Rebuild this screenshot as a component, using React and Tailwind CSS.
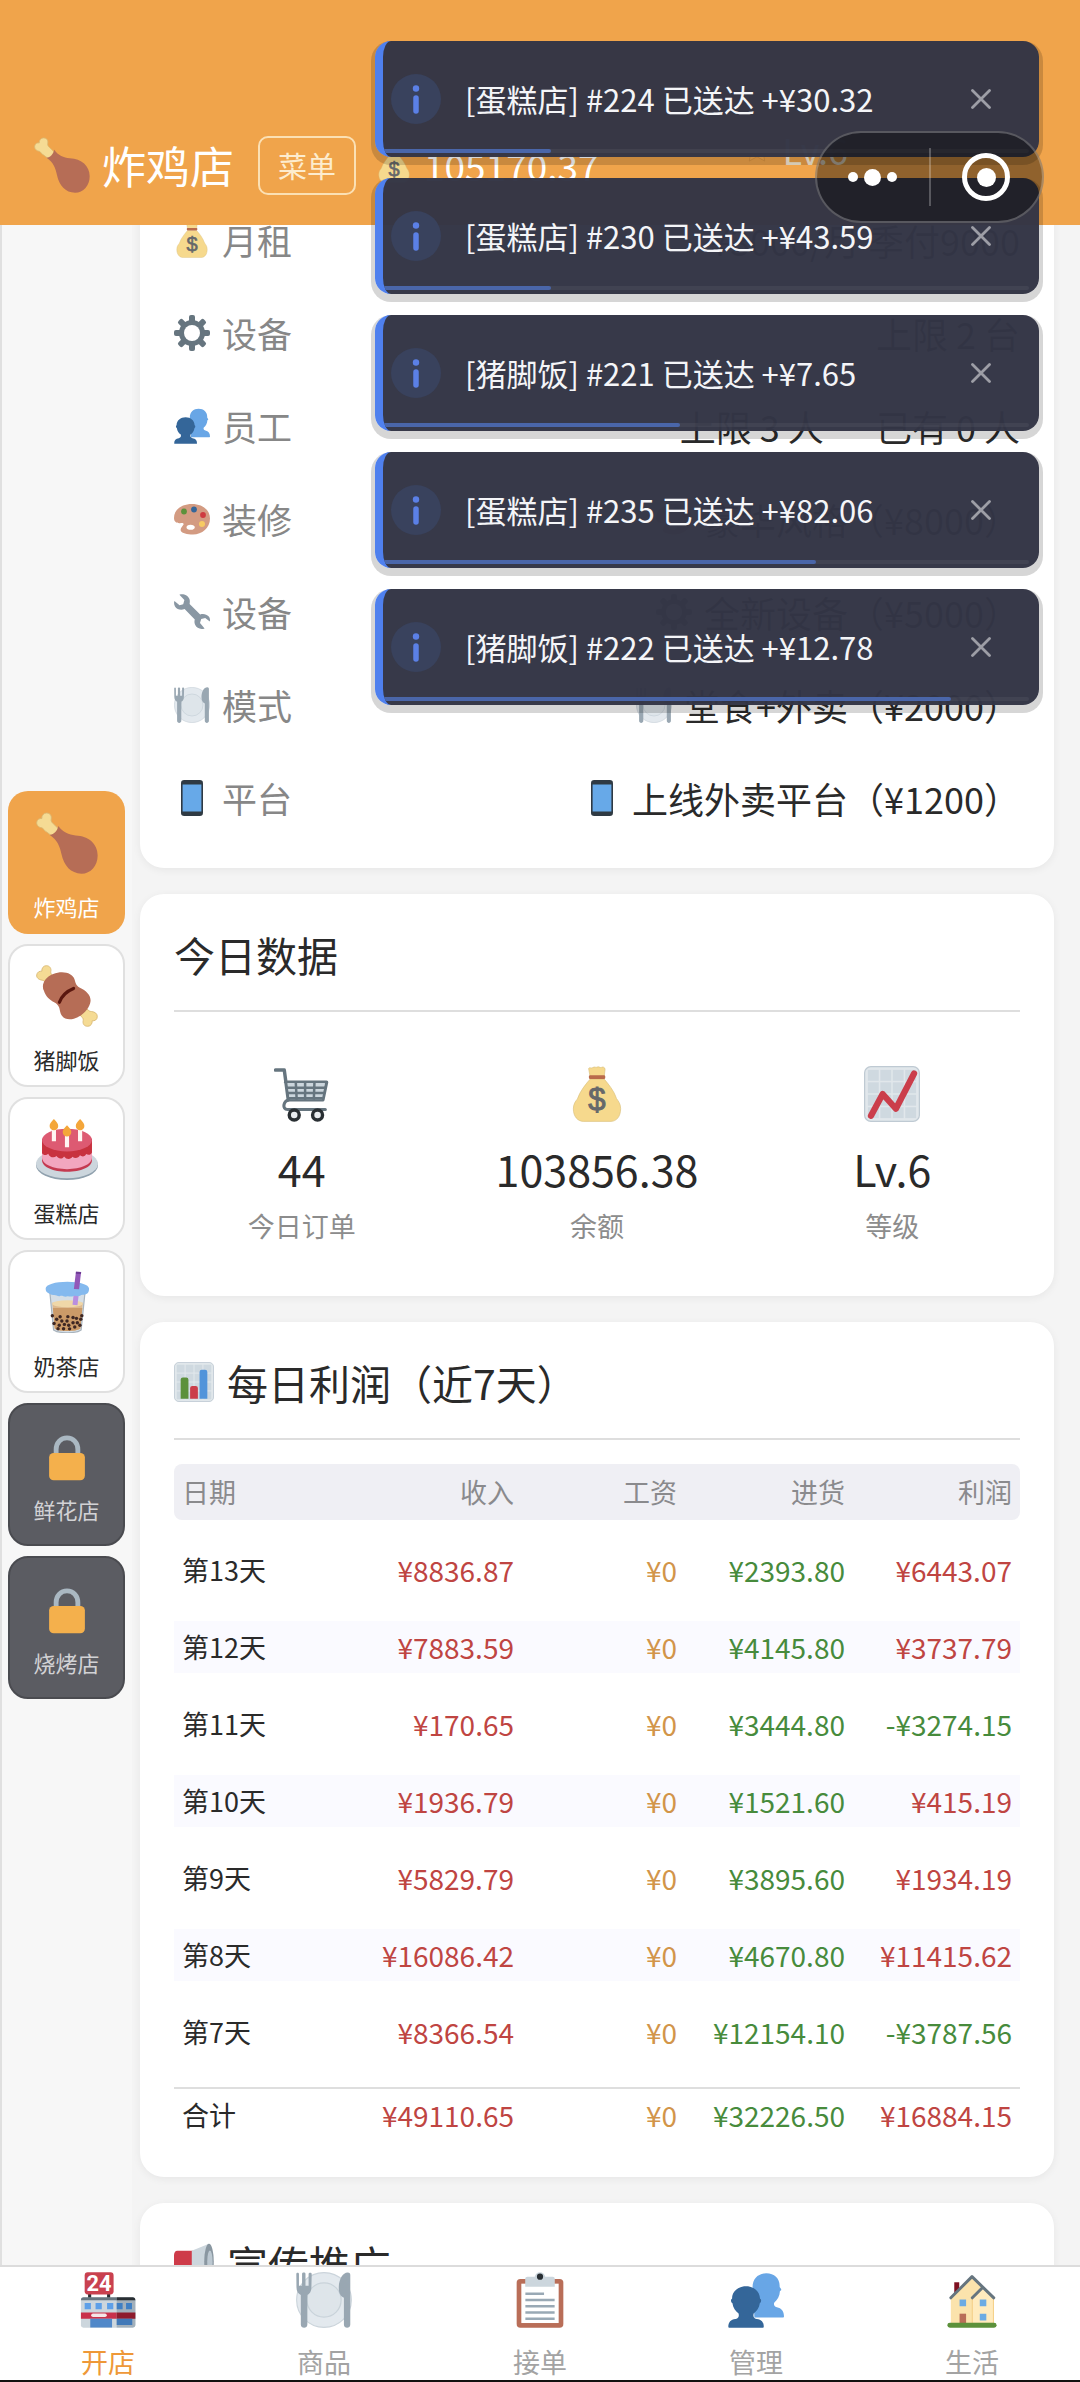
import React from "react";

/* ---------- pictograms ---------- */

function Svg({ className, children, viewBox = "0 0 36 36" }) {
  return (
    <svg viewBox={viewBox} className={"block shrink-0 " + className} aria-hidden="true">
      {children}
    </svg>
  );
}

function Drumstick({ className }) {
  return (
    <Svg className={className}>
      <path d="M6.200 11.600C4.600 11 4.600 9.600 3.400 9.200 1.800 9 .2 7.800.4 6 .6 4.200 2.200 3.600 3.400 3.800 3.200 2.200 4.400.6 6.200.6c2.200 0 3 1.800 2.600 3.600-.2 1.200.4 1.800 1.200 2.600l5.600 5.400-3.400 4z" fill="#F5DB94" stroke="#D9B873" strokeWidth=".5" />
      <path d="M13 8.200c2.600 3.600 6 5.200 10 5.400C30.600 13.800 35.800 18.600 35.800 25.200c0 6-4 10.600-9.400 10.600-6.200 0-10.200-4.600-11.600-11.200-.9-4.400-2.400-8.400-6.800-11.200 2.600-.4 4.400-2.400 5-5.200z" fill="#B66D56" />
    </Svg>
  );
}

function MeatOnBone({ className }) {
  return (
    <Svg className={className}>
      <path d="M6.200 10.600C5 10 4.800 9 3.600 8.800 1.600 8.600.2 7.400.4 5.800.6 4.200 2 3.400 3.400 3.600 3.200 2 4.200.4 6 .4c2 0 3 1.600 2.600 3.400-.2 1.200.4 1.600 1 2.200L12 8.800 8.600 12.800z" fill="#F5DB94" stroke="#D9B873" strokeWidth=".5" />
      <path d="M29.600 25.600c1 .8 1.400 1.400 2.600 1.400 2 .2 3.400 1.200 3.400 3 0 1.800-1.600 2.600-3 2.400.2 1.600-.8 3.200-2.600 3.200-2.200 0-3-1.600-2.600-3.400.2-1.200-.4-1.600-1-2.200L24 27.600l3.200-4z" fill="#F5DB94" stroke="#D9B873" strokeWidth=".5" />
      <path d="M4.600 15c-1.800-3.400.6-8 5.400-9.800 5.600-2.200 11.200-.6 12.400 3.200.6 2 .8 3.400 2.800 4.600 4.800 2.200 7.400 5.400 6.200 9.400-1.200 4-5 7.600-9.400 8.800-4.400 1.200-7.400-.8-8-4.200-.4-2.400-1-4-3.200-5.200C7.800 20.200 5.600 18.200 4.600 15z" fill="#B66D56" />
      <path d="M13.600 21.600c1.400-3.800 4.200-6.400 8.200-8" fill="none" stroke="#5A170F" strokeWidth="1.900" strokeLinecap="round" />
    </Svg>
  );
}

function Cake({ className }) {
  return (
    <Svg className={className}>
      <ellipse cx="18" cy="27.600" rx="18" ry="8.400" fill="#8FA0AD" />
      <ellipse cx="18" cy="26.600" rx="18" ry="8.400" fill="#CCD6DD" />
      <path d="M3.500 13v11.500c0 4 6.500 6.700 14.500 6.700s14.500-2.700 14.500-6.700V13z" fill="#C43A50" />
      <path d="M3.500 13v10c0 4 6.500 6.700 14.500 6.700S32.500 27 32.500 23V13z" fill="#F2A6BF" />
      <path d="M3.500 12v8.500c1 1.600 2.800 1 3.600.2 1 2.400 3.400 2.600 4.800 1.400 1.200 1.800 3.200 2 4.400.2 1.400 2 4 1.800 4.800.2 1.600 1.400 3.600.8 4.400-.8 1.600 1.200 3.200.4 3.600-.8 1.200.8 2.800.6 3.400-.9V12z" fill="#C8323F" />
      <ellipse cx="18" cy="12.800" rx="14.500" ry="6.600" fill="#DD5A72" />
      <path d="M9.200 6.500h2.400v7H9.200zM16.800 10h2.400v7h-2.400zM24.400 6.500h2.400v7h-2.400z" fill="#FFF5F2" />
      <path d="M10.400.6c1.600 1.600 2.500 2.800 2.500 4a2.500 2.500 0 0 1-5 0c0-1.200.9-2.400 2.500-4zM18 4.200c1.600 1.600 2.500 2.800 2.500 4a2.500 2.500 0 0 1-5 0c0-1.200.9-2.400 2.500-4zM25.600.6c1.600 1.600 2.500 2.800 2.500 4a2.500 2.500 0 0 1-5 0c0-1.200.9-2.400 2.500-4z" fill="#F4A63A" />
    </Svg>
  );
}

function BubbleTea({ className }) {
  const pearls = [
    [9.500, 26], [12, 28], [10.500, 30.500], [13.500, 31.500], [15, 29], [12.800, 33.500], [16.500, 31],
    [16, 33.500], [18, 29], [19, 31.500], [19.500, 33.600], [21.500, 30], [22.500, 32.500], [24, 30],
    [23.500, 27.500], [26, 28], [25.500, 31.500], [18.500, 26.500], [21.500, 27], [26.600, 26], [14, 26.600],
  ];
  return (
    <Svg className={className}>
      <path d="M8 12h20.500l-2.300 22.200c-3 2.200-13 2.200-16 0z" fill="#D5DEE6" stroke="#A9B4BD" strokeWidth=".7" />
      <path d="M9.400 18.500h17.800l-1.500 15c-3 1.700-11.800 1.700-14.800 0z" fill="#DDB98E" />
      <path d="M9.800 21.500h17.100l-1.200 12c-3 1.700-11.800 1.700-14.800 0z" fill="#CB9A68" />
      <ellipse cx="18.300" cy="19" rx="8.900" ry="2" fill="#EFD7A8" />
      {pearls.map(([x, y], i) => (
        <circle key={i} cx={x} cy={y} r="1" fill="#3E2723" />
      ))}
      <path d="M22 12.500l2.900.2-.8 7.200-2.900-.3z" fill="#B98FE0" />
      <path d="M5.600 10.200c0-2.400 5.600-4 12.600-4s12.600 1.600 12.600 4c0 2.200-.8 3-1.600 3.200-1.400.8-2.800.2-3.600 1-1.600.6-2.800-.4-4 .2-1.600.6-2.600-.2-3.800.2-1.400.4-2.600-.8-4-.2-1.400.2-2.200-.8-3.600-.6-1.600 0-2.400-1-3.200-1.200-.8-.4-1.400-1-1.400-2.600z" fill="#84B9EE" />
      <path d="M23.200.4l3 .2-1.200 10-3-.2z" fill="#9257B8" />
      <path d="M23.200.4l3 .2-.1 1.200-3-.2z" fill="#6D3A94" />
    </Svg>
  );
}

function Lock({ className }) {
  return (
    <Svg className={className}>
      <path d="M9.500 16v-4.600C9.500 6 13.200 2.300 18 2.300s8.500 3.700 8.500 9.100V16" fill="none" stroke="#AAB8C2" strokeWidth="3.800" />
      <rect x="4" y="14" width="28" height="21.500" rx="3.600" fill="#F4B04C" />
    </Svg>
  );
}

function MoneyBag({ className }) {
  return (
    <Svg className={className}>
      <path d="M12.600 1.600c.8-1.200 1.800.2 2.800-.6 1-.9 1.800.3 2.700-.3 1-.6 1.800.6 2.700.2 1.200-.6 2.200 0 2.400 1.200L22.600 7h-9z" fill="#F6D98D" stroke="#D9BE7A" strokeWidth=".4" />
      <path d="M13.600 8.400h9c2.600 3 6.400 7.600 8 12.600 1 1.400 2.600 3.200 2.600 6.400 0 5-2.600 8.200-6.200 8.200H9.200C5.600 35.600 2.800 32.400 2.800 27.600c0-3.400 1.400-4.800 2.600-6.400 1.600-5 5.600-9.800 8.200-12.800z" fill="#F6D98D" stroke="#D9BE7A" strokeWidth=".4" />
      <rect x="12.800" y="6" width="10.500" height="2.400" rx=".8" fill="#B96A4B" />
      <text x="18" y="28.500" textAnchor="middle" fontFamily="Liberation Sans" fontSize="20" fill="#66686A" stroke="#66686A" strokeWidth=".6">$</text>
    </Svg>
  );
}

function Gear({ className }) {
  return (
    <Svg className={className}>
      {[0, 45, 90, 135].map((a) => (
        <rect key={a} x="15" y="0" width="6" height="36" rx="2" fill="#66757F" transform={"rotate(" + a + " 18 18)"} />
      ))}
      <circle cx="18" cy="18" r="13" fill="#66757F" />
      <circle cx="18" cy="18" r="8" fill="#fff" />
    </Svg>
  );
}

function People({ className }) {
  return (
    <Svg className={className}>
      <path d="M15.800 9.600C15.800 4 19.600.8 24.600.8c5.200 0 8.600 3.400 8.600 8 0 .8 0 1 .6 1.600.8 1 .4 1.600-.4 1.800-.2 3.400-1.600 5.600-3.600 7.400-.6 1-.2 2.600 1.600 3 3 .6 4.600 2.600 4.600 6 0 .4-.2.600-.6.600H17z" fill="#68A6E6" />
      <path d="M2.800 20c-1-.4-1.200-2.600-.2-2.800C2.600 12.400 6.600 9.200 11.600 9.200s8.800 3.200 9 8c1 .2.900 2.400-.1 2.800-.5 3.200-2 5.200-4 6.600-.4 1.600-.2 3 2 3.600 3 .4 4.500 2 4.500 5 0 .400-.2.600-.6.600H.8c-.4 0-.6-.2-.6-.6 0-3 1.600-4.600 4.600-5 2.200-.6 2.400-2 2-3.600-2-1.400-3.500-3.400-4-6.600z" fill="#346699" />
    </Svg>
  );
}

function Palette({ className }) {
  return (
    <Svg className={className}>
      <path fillRule="evenodd" d="M18 3c10.400 0 18 6 18 14.500C36 27 28 33.500 19 33.500c-6 0-11-1-12.200-3.700-.8-2.200 1.200-4 2.600-6 .8-1.400-.6-2.200-2.400-1.800C4 22.600 0 21.800 0 17 0 8.500 7.600 3 18 3zM16.500 23.800c-2.500 0-4 1.200-4 2.600s1.800 2.400 4.300 2.400 4-1.200 4-2.600-1.800-2.400-4.300-2.400z" fill="#D39B82" />
      <circle cx="10" cy="10.500" r="2.900" fill="#5C913B" />
      <circle cx="20" cy="8.500" r="2.900" fill="#346699" />
      <circle cx="29" cy="14" r="2.900" fill="#CE3B40" />
      <circle cx="28" cy="23" r="3" fill="#F8CB62" />
    </Svg>
  );
}

function Wrench({ className }) {
  return (
    <Svg className={className}>
      <path d="M5.400.8c3.600-1.400 8.800.6 10.200 4.600.4 1.800.2 3.400 0 4.600l10.600 10.400c3-1 6.400-.4 8.600 2.200 1.200 1.400 1.400 3.400 1 5l-4.600-3.600-4 1-1.200 4 4.600 5.400c-3.600 1.600-8 0-9.600-3.800-.8-2-.6-3.800-.2-5.200L10.600 15c-3.600 1.600-7.600.4-9.600-2.600C0 10.600-.2 8.600.4 7l5.200 4.200 3.600-1L10.400 6z" fill="#8997A3" />
    </Svg>
  );
}

function Plate({ className }) {
  return (
    <Svg className={className}>
      <circle cx="18" cy="18" r="17.600" fill="#E3E9EE" stroke="#CBD4DB" strokeWidth=".7" />
      <circle cx="18" cy="18" r="11" fill="#DEE5EA" stroke="#C9D3DA" strokeWidth=".8" />
      <path d="M.2 1.200C.2.200 1.900.2 1.900 1.200v7.600h2V1.200c0-1.100 2.200-1.100 2.200 0v7.600h2V1.200c0-1 2-1 2 0l-.2 8.600c0 2.600-1 4.200-2.600 5v19c0 2.800-4.200 2.800-4.200 0v-19C1.400 14 .3 12.400.3 9.800z" fill="#99A7B2" />
      <path d="M33.300.3c1.200 0 1.600.7 1.600 1.700v31.800c0 2.800-4.100 2.800-4.100 0V16.600c-2.500-1.200-3.400-3.600-3.300-7C27.700 4.600 30 .3 33.300.3z" fill="#99A7B2" />
    </Svg>
  );
}

function Phone({ className }) {
  return (
    <Svg className={className}>
      <rect x="7" y="0" width="22" height="36" rx="3.200" fill="#2F3A43" />
      <rect x="8.600" y="4.500" width="18.800" height="27" fill="#67A9E8" />
    </Svg>
  );
}

function Cart({ className }) {
  return (
    <Svg className={className}>
      <path d="M1 2.600h5.600l2.600 19.200M7.400 10.400h26.400l-2.400 11.400H9.400" fill="none" stroke="#66757F" strokeWidth="2.200" strokeLinecap="round" strokeLinejoin="round" />
      <path d="M8.600 11h24.200l-2 10.400H10z" fill="#CCD6DD" />
      <path d="M8.400 14h24.600M8.800 17.400h23.400M9.400 20.800h22M14 10.400l.6 11.400M20 10.400v11.400M26 10.400l-.4 11.400" fill="none" stroke="#66757F" strokeWidth="1.600" />
      <path d="M9.400 21.800c-3.600.8-4.200 6.200-.8 6.200H33" fill="none" stroke="#66757F" strokeWidth="2" strokeLinecap="round" />
      <circle cx="13" cy="31.500" r="3.200" fill="#E8ECEF" stroke="#292F33" strokeWidth="2.200" />
      <circle cx="28" cy="31.500" r="3.200" fill="#E8ECEF" stroke="#292F33" strokeWidth="2.200" />
    </Svg>
  );
}

function ChartGrid() {
  return (
    <>
      <rect x=".4" y=".4" width="35.200" height="35.200" rx="4" fill="#E1E7EB" stroke="#BFCAD3" strokeWidth=".8" />
      {[2.500, 10.500, 18.500, 26.500].map((y) =>
        [2.500, 10.500, 18.500, 26.500].map((x) => (
          <rect key={x + "-" + y} x={x} y={y} width="7" height="7" fill="#CFD9E0" />
        ))
      )}
    </>
  );
}

function TrendChart({ className }) {
  return (
    <Svg className={className}>
      <ChartGrid />
      <path d="M4.500 32L12 18l8.500 9.500L32.200 4.800" fill="none" stroke="#CB3E4B" strokeWidth="4" strokeLinecap="round" strokeLinejoin="round" />
    </Svg>
  );
}

function BarChart({ className }) {
  return (
    <Svg className={className}>
      <ChartGrid />
      <path d="M6 33V16a2 2 0 0 1 2-2h3a2 2 0 0 1 2 2v17z" fill="#5C913B" />
      <path d="M14.500 33V23.500a2 2 0 0 1 2-2h3a2 2 0 0 1 2 2V33z" fill="#CB3E4B" />
      <path d="M23 33V9a2 2 0 0 1 2-2h3a2 2 0 0 1 2 2v24z" fill="#5294DA" />
    </Svg>
  );
}

function Megaphone({ className }) {
  return (
    <Svg className={className}>
      <path d="M9 24h8l2 10h-7z" fill="#8A97A1" />
      <path d="M3 7h14v19H3c-1.800 0-3-1.800-3-4V11c0-2.200 1.200-4 3-4z" fill="#CE3B49" />
      <path d="M16 7L31.500.6V33L16 26z" fill="#CCD6DD" />
      <ellipse cx="31.500" cy="16.800" rx="4.300" ry="16.200" fill="#8A97A1" />
      <ellipse cx="32.300" cy="16.800" rx="2.400" ry="10" fill="#BCC8D1" />
    </Svg>
  );
}

function Store24({ className }) {
  return (
    <Svg className={className}>
      <path d="M5.200 13h2v4h-2zM17.400 13h2v4h-2z" fill="#292F33" />
      <rect x="3" y=".2" width="18.600" height="14.200" rx="2" fill="#C9414F" />
      <text x="12.200" y="12" textAnchor="middle" fontFamily="Roboto, sans-serif" fontWeight="700" fontSize="14" fill="#fff">24</text>
      <rect x=".6" y="16.500" width="35" height="19.300" rx="1.600" fill="#CCD6DD" />
      <path d="M23.600 16.500h10.400a1.600 1.600 0 0 1 1.600 1.600v16a1.600 1.600 0 0 1-1.600 1.600H23.600z" fill="#A2B0BB" />
      <path d="M.6 18.200c0-1.200.6-2 1.600-2h21.400v2z" fill="#66757F" />
      <path d="M23.600 16.200H34c1 0 1.600.8 1.600 2h-12z" fill="#292F33" />
      <path d="M3 20h4v4H3zM10 20h4v4h-4zM17.400 20h4v4h-4z" fill="#5D9FE8" />
      <path d="M23.600 20h3.800v4h-3.800zM29.600 20h3.800v4h-3.800z" fill="#3F7FC4" />
      <path d="M.6 26h23v4H.6z" fill="#C9304A" />
      <path d="M23.600 26h12v4h-12z" fill="#8E1B2C" />
      <rect x="7.200" y="26.700" width="10" height="2.200" rx="1.100" fill="#F5E6E8" />
      <path d="M6.600 30h14v5.700h-14z" fill="#5088C9" />
      <path d="M23.600 30h10v4h-10z" fill="#4179B8" />
    </Svg>
  );
}

function Clipboard({ className }) {
  return (
    <Svg className={className}>
      <rect x="3" y="4.500" width="30" height="31.300" rx="2.400" fill="#B96E58" />
      <rect x="6" y="7.500" width="24" height="25.300" fill="#fff" />
      <path d="M8.600 14h12M8.600 18h18.800M8.600 22h18.800M8.600 26h18.800M8.600 30h18.800" stroke="#99A9B5" strokeWidth="1.600" />
      <path d="M8.500 4.500c0-1 .6-1.500 1.500-1.500h4.600C15 1.400 16.300.2 18 .2S21 1.400 21.400 3H26c.9 0 1.500.5 1.500 1.500v5h-19z" fill="#CCD6DD" />
      <circle cx="18" cy="3" r="2" fill="#292F33" />
    </Svg>
  );
}

function House({ className }) {
  return (
    <Svg className={className}>
      <path d="M6.600 6.600h3.200v8H6.600z" fill="#7E1020" />
      <path d="M4.400 16L18 2.800l7.600 7.800 6.200 6.400v16H4.400z" fill="#FBE3AC" />
      <path d="M18.200 17l7-7 6.600 7v16H18.200z" fill="#FFEBBE" stroke="#F3CE83" strokeWidth=".6" />
      <path d="M4.400 16.600L18 3l14 13.600M18.200 16.600l6.800-6.800" fill="none" stroke="#66757F" strokeWidth="1.900" strokeLinecap="round" strokeLinejoin="round" />
      <path d="M10 17.600h4.200V22H10zM23 17.600h4.200V22H23zM23 26.800h4.200v4.400H23z" fill="#6CABE3" />
      <path d="M10 26.800h4.200V33H10z" fill="#B96E58" />
      <rect x="2.200" y="32.600" width="31.600" height="3.200" rx="1.600" fill="#5C913B" />
    </Svg>
  );
}

/* ---------- data ---------- */

const shops = [
  { name: "炸鸡店", Icon: Drumstick, state: "active" },
  { name: "猪脚饭", Icon: MeatOnBone, state: "open" },
  { name: "蛋糕店", Icon: Cake, state: "open" },
  { name: "奶茶店", Icon: BubbleTea, state: "open" },
  { name: "鲜花店", Icon: Lock, state: "locked" },
  { name: "烧烤店", Icon: Lock, state: "locked" },
];

const settings = [
  { Icon: MoneyBag, label: "月租", value: "¥3000/月 季付9000" },
  { Icon: Gear, label: "设备", value: "上限 2 台" },
  { Icon: People, label: "员工", value: "上限 3 人 \u3000 已有 0 人" },
  { Icon: Palette, label: "装修", ValueIcon: Palette, value: "豪华风格（¥8000）" },
  { Icon: Wrench, label: "设备", ValueIcon: Gear, value: "全新设备（¥5000）" },
  { Icon: Plate, label: "模式", ValueIcon: Plate, value: "堂食+外卖（¥2000）" },
  { Icon: Phone, label: "平台", ValueIcon: Phone, value: "上线外卖平台（¥1200）" },
];

const stats = [
  { Icon: Cart, value: "44", label: "今日订单" },
  { Icon: MoneyBag, value: "103856.38", label: "余额" },
  { Icon: TrendChart, value: "Lv.6", label: "等级" },
];

const days = [
  ["第13天", "¥8836.87", "¥0", "¥2393.80", "¥6443.07"],
  ["第12天", "¥7883.59", "¥0", "¥4145.80", "¥3737.79"],
  ["第11天", "¥170.65", "¥0", "¥3444.80", "-¥3274.15"],
  ["第10天", "¥1936.79", "¥0", "¥1521.60", "¥415.19"],
  ["第9天", "¥5829.79", "¥0", "¥3895.60", "¥1934.19"],
  ["第8天", "¥16086.42", "¥0", "¥4670.80", "¥11415.62"],
  ["第7天", "¥8366.54", "¥0", "¥12154.10", "-¥3787.56"],
];
const total = ["合计", "¥49110.65", "¥0", "¥32226.50", "¥16884.15"];

const toasts = [
  { text: "[蛋糕店] #224 已送达 +¥30.32", progress: 26 },
  { text: "[蛋糕店] #230 已送达 +¥43.59", progress: 26 },
  { text: "[猪脚饭] #221 已送达 +¥7.65", progress: 46 },
  { text: "[蛋糕店] #235 已送达 +¥82.06", progress: 67 },
  { text: "[猪脚饭] #222 已送达 +¥12.78", progress: 88 },
];

const tabs = [
  { label: "开店", Icon: Store24, active: true },
  { label: "商品", Icon: Plate },
  { label: "接单", Icon: Clipboard },
  { label: "管理", Icon: People },
  { label: "生活", Icon: House },
];

/* ---------- parts ---------- */

function Header() {
  return (
    <header className="flex h-[225px] shrink-0 items-center bg-[#f0a44b] pl-[34px] pt-[105px] text-white">
      <Drumstick className="size-14" />
      <h1 className="ml-3 text-[44px] leading-[56px]">炸鸡店</h1>
      <button className="ml-6 h-[59px] rounded-[10px] border-2 border-[#fbe0b4] px-[18px] text-[29px] leading-10 text-[#fdecce]">
        菜单
      </button>
      <div className="ml-5 flex items-center gap-3">
        <MoneyBag className="size-9" />
        <span className="text-[37px] leading-[56px]">105170.37</span>
      </div>
      <div className="ml-36 flex items-center gap-3 self-start pt-4 text-[36px] leading-[56px] text-[#fdf0d8]">
        <Svg className="size-7">
          <path d="M18 2l4.900 10.500L34 14l-8.200 8 2.200 11.500L18 28 8 33.500 10.200 22 2 14l11.100-1.500z" fill="#f2a94f" stroke="#d8913f" />
        </Svg>
        <span>Lv.6</span>
      </div>
    </header>
  );
}

const shopStyles = {
  active: "gap-4 pt-2 bg-[#f0a44b] text-white",
  open: "gap-4 pt-2 border-2 border-[#e0e0e0] bg-white text-[#2a2a2a]",
  locked: "gap-3 pt-[10px] border-2 border-[#4a4b50] bg-[#5b5c62] text-[#d2d2d5]",
};

function Sidebar() {
  return (
    <aside className="flex w-[132px] shrink-0 flex-col justify-center gap-[10px] border-l-2 border-[#e0e0e0] bg-[#f7f7f7] pl-[6px] pr-[7px]">
      {shops.map(({ name, Icon, state }) => (
        <button
          key={name}
          className={
            "flex h-[143px] w-full flex-col items-center justify-center rounded-[20px] text-[22px] leading-8 " +
            shopStyles[state]
          }
        >
          <Icon className={state === "locked" ? "size-[46px]" : "size-[62px]"} />
          <span>{name}</span>
        </button>
      ))}
    </aside>
  );
}

function Card({ className = "", children }) {
  return (
    <section className={"shrink-0 rounded-[24px] bg-white px-[34px] shadow-[0_2px_8px_rgba(0,0,0,0.06)] " + className}>
      {children}
    </section>
  );
}

function CardTitle({ Icon, children }) {
  return (
    <h2 className="flex h-[118px] items-center gap-[13px] border-b-2 border-[#dedede] pt-1 text-[41px] leading-[56px] text-[#2a2a2a]">
      {Icon && <Icon className="size-10" />}
      {children}
    </h2>
  );
}

function SettingsCard() {
  return (
    <Card className="pb-6">
      <dl>
        {settings.map(({ Icon, label, ValueIcon, value }, i) => (
          <div key={i} className="flex h-[93px] items-center text-[36px] leading-[56px]">
            <dt className="flex items-center gap-3 text-[35px] text-[#878787]">
              <Icon className="size-9" />
              {label}
            </dt>
            <dd className="ml-auto flex items-center gap-3 whitespace-pre text-[#2a2a2a]">
              {ValueIcon && <ValueIcon className="size-9" />}
              {value}
            </dd>
          </div>
        ))}
      </dl>
    </Card>
  );
}

function TodayCard() {
  return (
    <Card className="pb-[50px]">
      <CardTitle>今日数据</CardTitle>
      <div className="grid grid-cols-3 gap-x-10 pt-[54px]">
        {stats.map(({ Icon, value, label }) => (
          <div key={label} className="flex flex-col items-center">
            <Icon className="size-14" />
            <div className="mt-[18px] text-[43px] leading-[56px] text-[#2a2a2a]">{value}</div>
            <div className="mt-[10px] text-[27px] leading-10 text-[#8c8c8c]">{label}</div>
          </div>
        ))}
      </div>
    </Card>
  );
}

function toneOf(column, value) {
  if (column === 0) return "text-[27px] text-[#2a2a2a] text-left";
  if (column === 2) return "text-[28px] text-[#d2954a] text-right";
  if (column === 3 || value.startsWith("-")) return "text-[28px] text-[#478b3c] text-right";
  return "text-[28px] text-[#bf4542] text-right";
}

function ProfitCard() {
  return (
    <Card className="pb-9">
      <CardTitle Icon={BarChart}>每日利润（近7天）</CardTitle>
      <table className="mt-6 w-full table-fixed border-separate border-spacing-0 leading-[52px]">
        <colgroup>
          <col />
          <col className="w-[168px]" />
          <col className="w-[163px]" />
          <col className="w-[168px]" />
          <col className="w-[167px]" />
        </colgroup>
        <thead>
          <tr>
            {["日期", "收入", "工资", "进货", "利润"].map((h, i) => (
              <th
                key={h}
                scope="col"
                className={
                  "h-14 bg-[#efeff4] px-2 py-0 text-[27px] font-normal text-[#8a8a8d] " +
                  (i === 0 ? "rounded-l-lg text-left" : i === 4 ? "rounded-r-lg text-right" : "text-right")
                }
              >
                {h}
              </th>
            ))}
          </tr>
          <tr aria-hidden="true">
            <td colSpan={5} className="h-3 p-0" />
          </tr>
        </thead>
        <tbody>
          {days.map((row, r) => (
            <tr key={row[0]}>
              {row.map((v, c) => (
                <td key={c} className="p-0 pb-[13px] pt-3">
                  <div className={"whitespace-nowrap px-2 " + toneOf(c, v) + (r % 2 ? " bg-[#fafaff]" : "")}>{v}</div>
                </td>
              ))}
            </tr>
          ))}
        </tbody>
        <tfoot>
          <tr aria-hidden="true">
            <td colSpan={5} className="h-4 p-0" />
          </tr>
          <tr>
            {total.map((v, c) => (
              <td key={c} className={"whitespace-nowrap border-t-2 border-[#dedede] px-2 py-0 " + toneOf(c, v)}>
                {v}
              </td>
            ))}
          </tr>
        </tfoot>
      </table>
    </Card>
  );
}

function Toast({ text, progress }) {
  return (
    <li className="rounded-[16px] shadow-[0_4px_0_4px_rgba(0,0,0,0.16)]">
      <div className="relative flex h-[116px] items-center overflow-hidden rounded-[16px] border-l-8 border-[#4f80ee] bg-[#333545]/98 pl-2">
        <Svg className="size-[50px]" viewBox="0 0 50 50">
          <circle cx="25" cy="25" r="25" fill="#39425d" />
          <circle cx="25" cy="14.500" r="3.200" fill="#5b80e6" />
          <path d="M25 24v13" stroke="#5b80e6" strokeWidth="5.500" strokeLinecap="round" />
        </Svg>
        <p className="ml-6 whitespace-nowrap text-[31px] leading-[56px] text-[#f4f5f8]">{text}</p>
        <button aria-label="关闭" className="ml-auto mr-12 text-[#9d9ea6]">
          <Svg className="size-5" viewBox="0 0 20 20">
            <path d="M1.500 1.500l17 17M18.500 1.500l-17 17" stroke="currentColor" strokeWidth="2.800" strokeLinecap="round" />
          </Svg>
        </button>
        <div className="absolute bottom-1 left-0 right-[10px] h-1 rounded-r bg-white/5">
          <div className="h-full rounded-r bg-[#4a66a9]" style={{ width: progress + "%" }} />
        </div>
      </div>
    </li>
  );
}

function Toasts() {
  return (
    <ul aria-live="polite" className="absolute right-[41px] top-[41px] flex w-[664px] flex-col gap-[21px]">
      {toasts.map((t) => (
        <Toast key={t.text} {...t} />
      ))}
    </ul>
  );
}

function Capsule() {
  return (
    <div className="absolute right-9 top-[131px] flex h-[92px] w-[229px] items-center rounded-full border-2 border-white/25 bg-black/40">
      <button aria-label="更多" className="flex h-full flex-1 items-center justify-center gap-[6px]">
        <span className="size-[10px] rounded-full bg-white" />
        <span className="size-[17px] rounded-full bg-white" />
        <span className="size-[10px] rounded-full bg-white" />
      </button>
      <span className="h-[58px] w-[2px] bg-white/25" />
      <button aria-label="关闭小程序" className="flex h-full flex-1 items-center justify-center">
        <span className="flex size-12 items-center justify-center rounded-full border-[5px] border-white">
          <span className="size-[19px] rounded-full bg-white" />
        </span>
      </button>
    </div>
  );
}

function TabBar() {
  return (
    <nav className="grid shrink-0 grid-cols-5 border-b-2 border-t-2 border-b-[#111] border-t-[#dcdcdc] bg-white">
      {tabs.map(({ label, Icon, active }) => (
        <a
          key={label}
          href="#"
          aria-current={active ? "page" : undefined}
          className={"flex flex-col items-center gap-4 pt-[5px] text-[27px] leading-9 " + (active ? "text-[#ee9838]" : "text-[#a3a3a3]")}
        >
          <Icon className="size-14" />
          {label}
        </a>
      ))}
    </nav>
  );
}

export default function App() {
  return (
    <div className="relative flex h-screen flex-col overflow-hidden bg-[#f4f4f4] font-['Noto_Sans_CJK_SC',sans-serif] font-normal">
      <Header />
      <div className="flex min-h-0 flex-1">
        <Sidebar />
        <main className="flex min-w-0 flex-1 flex-col overflow-hidden pl-2 pr-[26px]">
          <div className="-mt-8 flex flex-col gap-[26px]">
            <SettingsCard />
            <TodayCard />
            <ProfitCard />
            <Card>
              <CardTitle Icon={Megaphone}>宣传推广</CardTitle>
            </Card>
          </div>
        </main>
      </div>
      <TabBar />
      <Toasts />
      <Capsule />
    </div>
  );
}
